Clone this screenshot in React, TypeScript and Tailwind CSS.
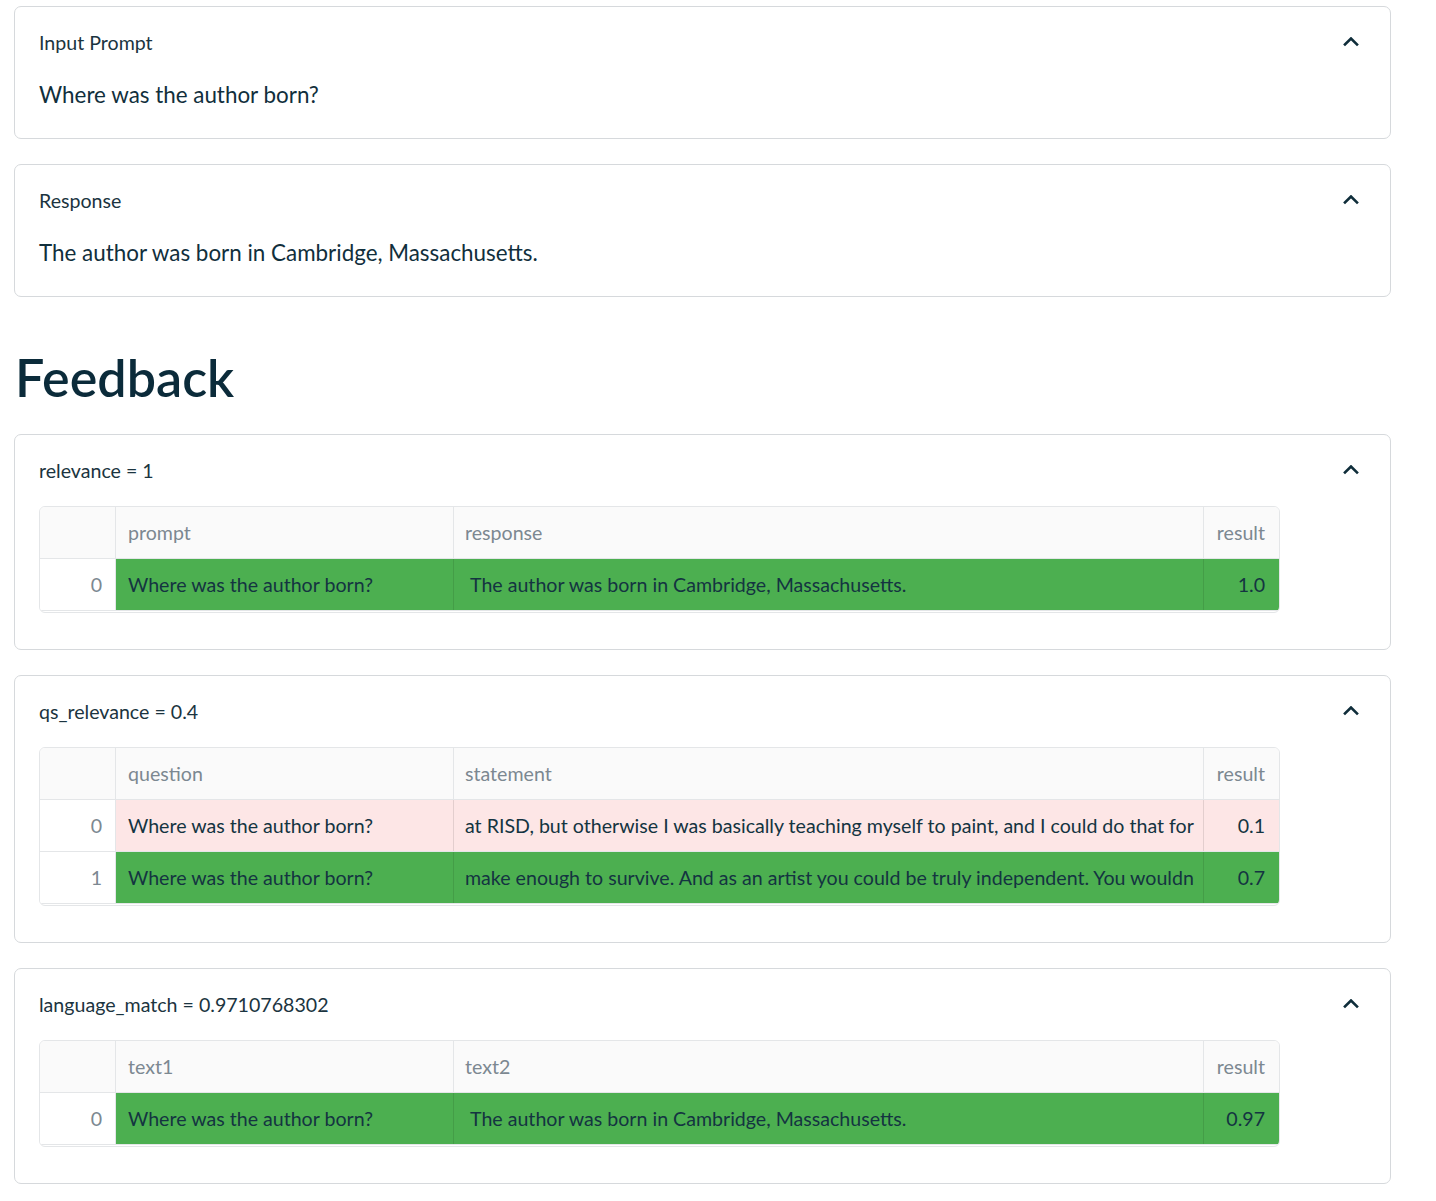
import React from "react"

const FONT = { fontFamily: "Lato, 'Noto Sans', sans-serif" }

type Row = { idx: number; a: string; b: string; result: string; tone: "green" | "pink"; padB?: boolean }

interface TableSpec {
  cols: [string, string]
  rows: Row[]
}

function Chevron() {
  return (
    <svg width="16" height="10" viewBox="0 0 16 10" fill="none" className="shrink-0 -translate-y-[1px]">
      <path d="M2 7.5 L8 1.5 L14 7.5" stroke="#0f2d3a" strokeWidth="2.6" strokeLinecap="square" />
    </svg>
  )
}

function Card({ label, children }: { label: string; children: React.ReactNode }) {
  return (
    <div className="w-[1377px] rounded-[7px] border border-[#d6d9dc] bg-white">
      <div className="flex h-[71px] items-center justify-between pl-[24px] pr-[31px]">
        <span className="text-[19.6px] text-[#1b3440]">{label}</span>
        <Chevron />
      </div>
      {children}
    </div>
  )
}

function DataTable({ spec }: { spec: TableSpec }) {
  const tone = (t: Row["tone"]) => (t === "green" ? "bg-[#4caf50]" : "bg-[#fde6e6]")
  return (
    <div className="w-[1241px] overflow-hidden rounded-[6px] border border-[#e4e6e8] text-[19.6px]">
      <div className="flex h-[52px] border-b border-[#e4e6e8] bg-[#fafafa] text-[#7c8891]">
        <div className="w-[76px] shrink-0 border-r border-[#e4e6e8]" />
        <div className="flex w-[338px] shrink-0 items-center border-r border-[#e4e6e8] pl-[12px]">{spec.cols[0]}</div>
        <div className="flex w-[750px] shrink-0 items-center border-r border-[#e4e6e8] pl-[11px]">{spec.cols[1]}</div>
        <div className="flex w-[75px] shrink-0 items-center justify-end pr-[14px]">result</div>
      </div>
      {spec.rows.map((r) => (
        <div key={r.idx} className="flex h-[52px] border-b border-[#e4e6e8] text-[#143441]">
          <div className="flex w-[76px] shrink-0 items-center justify-end border-r border-[#e4e6e8] bg-white pr-[13px] text-[#7c8891]">
            {r.idx}
          </div>
          <div className={`flex w-[338px] shrink-0 items-center border-r border-black/10 pl-[12px] ${tone(r.tone)}`}>{r.a}</div>
          <div
            className={`flex w-[750px] shrink-0 items-center overflow-hidden whitespace-nowrap border-r border-black/10 ${r.padB ? "pl-[16px]" : "pl-[11px]"} ${tone(r.tone)}`}
          >
            {r.b}
          </div>
          <div className={`flex w-[75px] shrink-0 items-center justify-end pr-[14px] ${tone(r.tone)}`}>{r.result}</div>
        </div>
      ))}
      <div className="h-[1px]" />
    </div>
  )
}

const q = "Where was the author born?"
const ans = "The author was born in Cambridge, Massachusetts."

const feedback: { label: string; spec: TableSpec }[] = [
  {
    label: "relevance = 1",
    spec: { cols: ["prompt", "response"], rows: [{ idx: 0, a: q, b: ans, result: "1.0", tone: "green", padB: true }] },
  },
  {
    label: "qs_relevance = 0.4",
    spec: {
      cols: ["question", "statement"],
      rows: [
        {
          idx: 0,
          a: q,
          b: "at RISD, but otherwise I was basically teaching myself to paint, and I could do that for",
          result: "0.1",
          tone: "pink",
        },
        {
          idx: 1,
          a: q,
          b: "make enough to survive. And as an artist you could be truly independent. You wouldn",
          result: "0.7",
          tone: "green",
        },
      ],
    },
  },
  {
    label: "language_match = 0.9710768302",
    spec: { cols: ["text1", "text2"], rows: [{ idx: 0, a: q, b: ans, result: "0.97", tone: "green", padB: true }] },
  },
]

export default function App() {
  return (
    <div className="min-h-screen bg-white pl-[14px] pt-[6px] pb-[16px]" style={FONT}>
      <div className="flex flex-col gap-[25px]">
        <Card label="Input Prompt">
          <p className="pb-[26px] pl-[24px] text-[22.4px] leading-[34px] text-[#112f3c]">{q}</p>
        </Card>
        <Card label="Response">
          <p className="pb-[26px] pl-[24px] text-[22.4px] leading-[34px] text-[#112f3c]">{ans}</p>
        </Card>
      </div>

      <h2 className="mt-[48px] mb-[25px] pl-[1px] text-[52px] font-semibold leading-[64px] text-[#0b2b3a]">Feedback</h2>

      <div className="flex flex-col gap-[25px]">
        {feedback.map((f) => (
          <Card key={f.label} label={f.label}>
            <div className="pb-[36px] pl-[24px]">
              <DataTable spec={f.spec} />
            </div>
          </Card>
        ))}
      </div>
    </div>
  )
}
